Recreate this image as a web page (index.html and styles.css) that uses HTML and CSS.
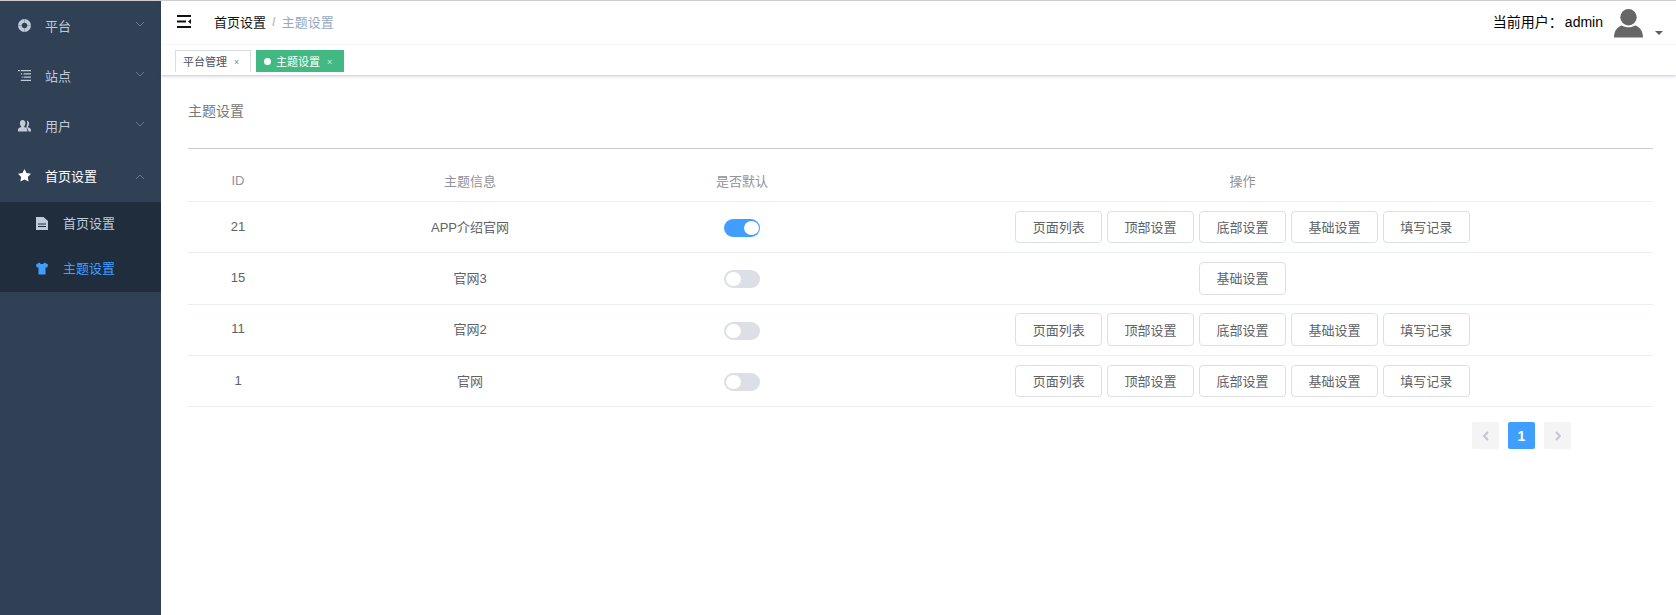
FILE: index.html
```html
<!DOCTYPE html>
<html lang="zh-CN">
<head>
<meta charset="utf-8">
<title>主题设置</title>
<link rel="stylesheet" href="styles.css">
</head>
<body>
<div class="app">
  <aside class="sidebar">
    <div class="menu-item">
      <svg class="mi" viewBox="0 0 14 14"><path fill="#bfcbd9" fill-rule="evenodd" d="M7 0a7 7 0 1 1 0 14A7 7 0 0 1 7 0zM7 4a3 3 0 1 0 0 6 3 3 0 0 0 0-6z"/><path stroke="#304156" stroke-opacity=".45" stroke-width=".7" d="M7 0v4M7 10v4M0 7h4M10 7h4"/></svg>
      <span class="mt">平台</span>
      <svg class="chev" viewBox="0 0 10 6"><path d="M1 1l4 4 4-4" fill="none" stroke="#6b7888"/></svg>
    </div>
    <div class="menu-item">
      <svg class="mi" viewBox="0 0 14 14"><path fill="#bfcbd9" d="M0 1h2v1.500H0zM3 1h11v1.500H3zM3 4.500h1.500V6H3zM6 4.500h8V6H6zM4 8h1v1.500H4zM6 8h8v1.500H6zM3 11.500h11V13H3z"/></svg>
      <span class="mt">站点</span>
      <svg class="chev" viewBox="0 0 10 6"><path d="M1 1l4 4 4-4" fill="none" stroke="#6b7888"/></svg>
    </div>
    <div class="menu-item">
      <svg class="mi" viewBox="0 0 14 14"><path fill="#bfcbd9" d="M5 1c2 0 3 1.500 3 3.500 0 1.500-.6 2.700-1.400 3.200v1c2 .6 3.400 1.500 3.400 3V13.500H0v-1.800c0-1.500 1.400-2.400 3.400-3v-1C2.600 7.200 2 6 2 4.500 2 2.500 3 1 5 1z"/><path fill="#bfcbd9" d="M9.500 2c1.800.2 2.500 1.500 2.500 3 0 1.300-.5 2.300-1.200 2.800v1c1.500.5 3.200 1.300 3.200 2.700v2h-2.800c0-2.500-1-3.800-2.500-4.700.8-1 1.300-2.500 1.300-4.100 0-1-.2-1.900-.5-2.700z"/></svg>
      <span class="mt">用户</span>
      <svg class="chev" viewBox="0 0 10 6"><path d="M1 1l4 4 4-4" fill="none" stroke="#6b7888"/></svg>
    </div>
    <div class="menu-item open">
      <svg class="mi" viewBox="0 0 14 14"><path fill="#fff" d="M7 0l2.200 4.400 4.800.7-3.400 3.400.8 4.900L7 11.200l-4.400 2.200.8-4.900L0 5.100l4.800-.7z"/></svg>
      <span class="mt">首页设置</span>
      <svg class="chev" viewBox="0 0 10 6"><path d="M1 5l4-4 4 4" fill="none" stroke="#6b7888"/></svg>
    </div>
    <div class="submenu">
      <div class="sub-item">
        <svg class="si" viewBox="0 0 12 13"><path fill="#bfcbd9" fill-rule="evenodd" d="M0 0h7.500L12 4v9H0zM2 6.500v1h8v-1zM2 9v1h8V9z"/></svg>
        <span class="st">首页设置</span>
      </div>
      <div class="sub-item active">
        <svg class="si" viewBox="0 0 12 13"><path fill="#409eff" d="M3.500.5L0 2.500l.8 3.200 1.700-.5V12.500h7V5.200l1.700.5L12 2.500 8.500.5C8 1.500 7 2 6 2S4 1.500 3.500.5z"/></svg>
        <span class="st">主题设置</span>
      </div>
    </div>
  </aside>
  <div class="main">
    <header class="top">
      <div class="navbar">
        <svg class="hamb" viewBox="0 0 14 13"><path fill="#111" d="M0 0h14v2H0zM0 5.500h9v2H0zM0 11h14v2H0zM14 4v5l-3-2.500z"/></svg>
        <span class="crumb">首页设置</span>
        <span class="sep">/</span>
        <span class="crumb-cur">主题设置</span>
        <div class="user">
          <span class="uname">当前用户：<span class="who">admin</span></span>
          <svg class="avatar" viewBox="0 0 30 30"><circle cx="15" cy="9" r="8.500" fill="#666"/><path fill="#666" d="M0 30c0-8 4-11 8-12.500 4 2.500 10 2.500 14 0 4 1.500 8 4.500 8 12.500z"/></svg>
          <span class="caret"></span>
        </div>
      </div>
      <div class="tabs">
        <div class="tab">平台管理<span class="x">×</span></div>
        <div class="tab on"><i class="dot"></i>主题设置<span class="x">×</span></div>
      </div>
    </header>
    <section class="content">
      <h2 class="title">主题设置</h2>
      <div class="table">
        <div class="row head">
          <div class="c-id">ID</div><div class="c-info">主题信息</div><div class="c-def">是否默认</div><div class="c-op">操作</div>
        </div>
        <div class="row">
          <div class="c-id">21</div><div class="c-info">APP介绍官网</div>
          <div class="c-def"><span class="switch on"></span></div>
          <div class="c-op"><button class="btn">页面列表</button><button class="btn">顶部设置</button><button class="btn">底部设置</button><button class="btn">基础设置</button><button class="btn">填写记录</button></div>
        </div>
        <div class="row">
          <div class="c-id">15</div><div class="c-info">官网3</div>
          <div class="c-def"><span class="switch"></span></div>
          <div class="c-op"><button class="btn">基础设置</button></div>
        </div>
        <div class="row">
          <div class="c-id">11</div><div class="c-info">官网2</div>
          <div class="c-def"><span class="switch"></span></div>
          <div class="c-op"><button class="btn">页面列表</button><button class="btn">顶部设置</button><button class="btn">底部设置</button><button class="btn">基础设置</button><button class="btn">填写记录</button></div>
        </div>
        <div class="row">
          <div class="c-id">1</div><div class="c-info">官网</div>
          <div class="c-def"><span class="switch"></span></div>
          <div class="c-op"><button class="btn">页面列表</button><button class="btn">顶部设置</button><button class="btn">底部设置</button><button class="btn">基础设置</button><button class="btn">填写记录</button></div>
        </div>
      </div>
      <div class="pager">
        <span class="pg"><svg viewBox="0 0 6 10" class="pa"><path d="M5 1L1 5l4 4" fill="none" stroke="#c0c4cc" stroke-width="1.800"/></svg></span>
        <span class="pg cur">1</span>
        <span class="pg"><svg viewBox="0 0 6 10" class="pa"><path d="M1 1l4 4-4 4" fill="none" stroke="#c0c4cc" stroke-width="1.800"/></svg></span>
      </div>
    </section>
  </div>
</div>
</body>
</html>
```
FILE: styles.css
```css
* { box-sizing: border-box; }
html, body { margin: 0; height: 100%; overflow: hidden; }
body {
  font-family: "Liberation Sans", "Noto Sans CJK SC", sans-serif;
  font-size: 13px;
  color: #606266;
  background: #fff;
  border-top: 1px solid #ccc;
}
.app { display: flex; height: 614px; }
.sidebar { width: 161px; flex: none; background: #304156; color: #bfcbd9; }
.menu-item { height: 50px; display: flex; align-items: center; padding: 0 0 2px 18px; }
.mi { width: 13px; height: 13px; flex: none; }
.mt { margin-left: 14px; flex: 1; }
.chev { width: 10px; height: 6px; margin-right: 16px; margin-top: -2px; }
.open { color: #fff; }
.open .chev { margin-top: 4px; }
.submenu { background: #1f2d3d; margin-top: 1px; }
.sub-item { height: 45px; display: flex; align-items: center; padding: 0 0 2px 36px; gap: 15px; }
.sub-item.active { color: #409eff; }
.si { width: 12px; height: 13px; flex: none; }
.st { margin-top: -2px; }
.main { flex: 1; min-width: 0; display: flex; flex-direction: column; }
.top { height: 74px; box-shadow: 0 1px 3px rgba(60, 60, 110, .3); flex: none; }
.navbar { height: 44px; display: flex; align-items: center; border-bottom: 1px solid #f6f6f6; padding: 0 0 3px 16px; color: #111; }
.hamb { width: 14px; height: 13px; margin-right: 23px; }
.sep { margin: 0 6px; color: #c0c4cc; font-weight: 700; }
.crumb-cur { color: #97a8be; }
.user { margin-left: auto; display: flex; align-items: center; padding-right: 13px; margin-top: 3px; }
.uname { color: #000; font-size: 14px; margin-top: -3px; }
.who { margin-left: 2px; }
.avatar { width: 29px; height: 30px; margin-left: 11px; }
.caret { width: 0; height: 0; border: 4px solid transparent; border-top: 4px solid #5a5e66; border-bottom: 0; margin: 20px 0 0 12px; }
.tabs { height: 30px; display: flex; gap: 5px; padding: 5px 0 0 14px; }
.tab { height: 22px; padding: 0 7px; border: 1px solid #d8dce5; border-bottom: 0; font-size: 11px; line-height: 20px; color: #495060; display: flex; align-items: center; white-space: nowrap; width: 76px; }
.tab.on { background: #42b983; border-color: #42b983; color: #fff; width: 88px; }
.dot { width: 7px; height: 7px; border-radius: 50%; background: #fff; margin-right: 5px; flex: none; }
.x { font-size: 9px; margin-left: 7px; opacity: .7; }
.content { padding: 0 23px 0 27px; }
.title { font-size: 14px; font-weight: 400; margin: 0; height: 74px; padding-top: 26px; line-height: 20px; color: #787878; border-bottom: 1px solid #ccc; }
.row { display: flex; align-items: center; height: 51.300px; padding-bottom: 2px; border-bottom: 1px solid #ebeef5; text-align: center; }
.head { color: #909399; height: 53px; padding: 11px 0 0; }
.c-id { width: 100px; }
.c-info { width: 364px; }
.c-def { width: 180px; display: flex; justify-content: center; }
.c-op { flex: 1; display: flex; justify-content: center; gap: 4.600px; }
.btn { width: 87.300px; height: 32.500px; padding: 0 0 1px; margin-top: 2px; border: 1px solid #dcdfe6; border-radius: 4px; background: #fff; color: #606266; font: inherit; }
.switch { position: relative; width: 36px; height: 18px; border-radius: 9px; background: #dcdfe6; margin-top: 4px; }
.switch::after { content: ""; position: absolute; left: 2px; top: 2px; width: 15px; height: 14px; border-radius: 50%; background: #fff; }
.switch.on { background: #409eff; }
.switch.on::after { left: 20px; }
.pager { display: flex; justify-content: flex-end; gap: 9px; margin-top: 15px; padding-right: 82px; }
.pg { width: 27px; height: 27px; border-radius: 2px; background: #f4f4f5; display: flex; align-items: center; justify-content: center; font-size: 14px; font-weight: 700; color: #fff; }
.pg.cur { background: #409eff; }
.pa { width: 6px; height: 10px; }
```
